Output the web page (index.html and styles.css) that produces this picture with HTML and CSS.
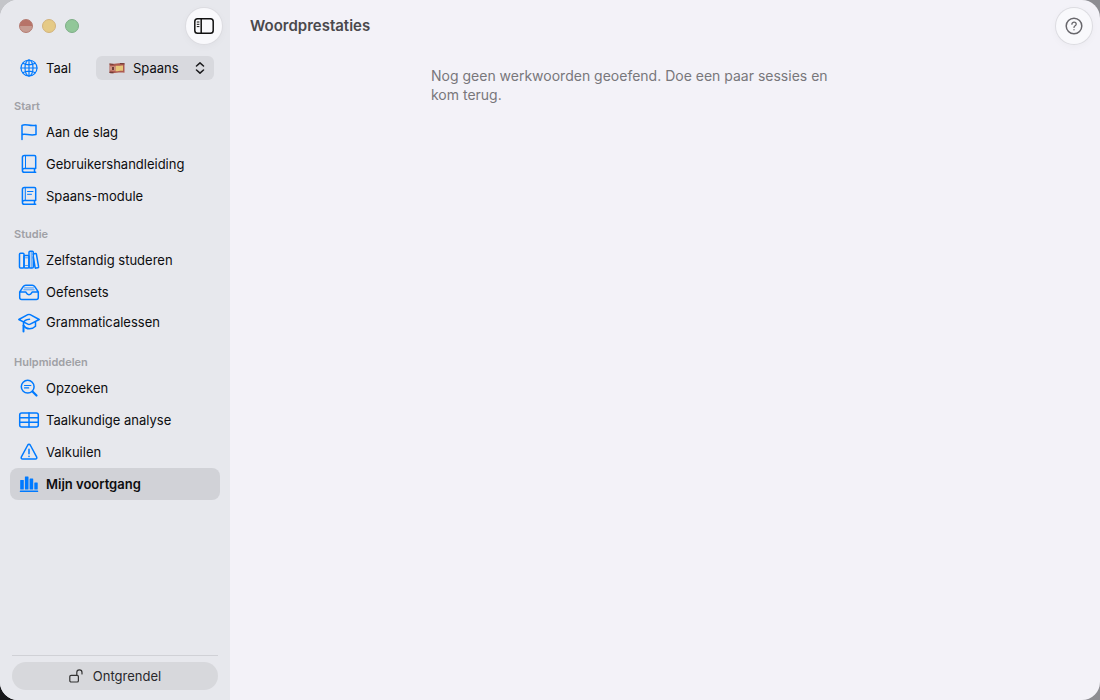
FILE: index.html
```html
<!DOCTYPE html>
<html lang="nl">
<head>
<meta charset="utf-8">
<title>Woordprestaties</title>
<link rel="stylesheet" href="styles.css">
</head>
<body>
<div class="window">
  <aside class="sidebar">
    <div class="titlebar">
      <div class="lights">
        <button class="light close" aria-label="Sluit"></button>
        <button class="light minimize" aria-label="Minimaliseer"></button>
        <button class="light expand" aria-label="Vergroot"></button>
      </div>
      <button class="round" aria-label="Navigatiekolom">
        <svg width="20" height="16" viewBox="0 0 20 16" fill="none" stroke="#111" stroke-width="1.5" stroke-linecap="round"><rect x=".8" y=".8" width="18.4" height="14.4" rx="2.8"/><path d="M7.2 1v14"/><path stroke-width="1" d="M3.2 4h1.8M3.2 6.3h1.8M3.2 8.6h1.8"/></svg>
      </button>
    </div>
    <div class="language">
      <svg class="icon" viewBox="0 0 22 22"><circle cx="11" cy="11" r="8"/><ellipse cx="11" cy="11" rx="4" ry="8"/><path d="M11 3v16M3 11h16M4.7 6.3c3.8 1.8 8.8 1.8 12.6 0M4.7 15.7c3.8-1.8 8.8-1.8 12.6 0"/></svg>
      <label for="language">Taal</label>
      <div class="picker">
        <select id="language"><option>Spaans</option></select>
        <svg class="flag" width="16" height="12" viewBox="0 0 16 12"><path fill="#ae5b50" d="M.5 1.5c5 1.2 9-1.5 15-.3v9.6c-6-1-9 1-15 .2z"/><path fill="#e6c779" d="M6.5 3.8c3 .3 5-.5 7.500-.3v5.300c-3-.4-5 .6-7.500.4z"/><path fill="#cf9585" d="M1 4.200l5.500.1v4.400L1 8.600z"/><path fill="#713e38" d="M3 5h2v3H3zM.5 1.500l4 .4v1l-4-.3zM11 .9l4.500.3v1.200L11 2zM.5 9.800l4 .1v1.300l-4-.2z"/></svg>
        <svg class="chevrons" width="10" height="12" viewBox="0 0 10 12"><path d="M1.500 4L5 .9 8.500 4M1.500 8L5 11.100 8.500 8"/></svg>
      </div>
    </div>
    <nav>
      <h2>Start</h2>
      <a href="#" class="row"><svg class="icon" viewBox="0 0 22 22"><path d="M4 18.500V4.300c4-2 7 1.200 14 0v9.200c-7 1.500-10-1.500-14 0"/></svg>Aan de slag</a>
      <a href="#" class="row"><svg class="icon" viewBox="0 0 22 22"><path d="M17.700 15.500V3.800c0-.8-.4-1.200-1.200-1.200H6.400c-1.300 0-2 .7-2 2v12.500M17.700 15.500H6.300c-2.500 0-2.500 3.800 0 3.800h11.400M16.500 15.500v3.800"/><path stroke-width="1" d="M7.500 2.600v12.900"/></svg>Gebruikershandleiding</a>
      <a href="#" class="row"><svg class="icon" viewBox="0 0 22 22"><path d="M17.700 15.500V3.800c0-.8-.4-1.200-1.200-1.200H6.400c-1.300 0-2 .7-2 2v12.500M17.700 15.500H6.300c-2.500 0-2.500 3.800 0 3.800h11.400M16.500 15.500v3.800"/><path stroke-width="1" d="M7.300 2.600v12.900M9.500 6.500h5.500M9.500 9.300h4"/></svg>Spaans-module</a>
      <h2>Studie</h2>
      <a href="#" class="row"><svg class="icon" viewBox="0 0 22 22"><rect x="1.500" y="4.300" width="4.500" height="14.700" rx="1"/><rect x="6" y="6.500" width="5" height="12.500" rx="1"/><rect x="11" y="2.300" width="4.300" height="16.700" rx="1"/><path d="M15.300 5l2.200-.4c.5-.1.800.1.900.6l2.200 12.500c.1.500-.1.900-.6 1l-2 .4c-.5.100-.8-.1-.9-.6L15.300 8"/><path stroke-width=".7" d="M7.500 8.800h2M7.500 16.500h2M13.200 2.500V19"/></svg>Zelfstandig studeren</a>
      <a href="#" class="row"><svg class="icon" viewBox="0 0 22 22"><path d="M1.700 11v5.500c0 1.300.7 2 2 2h14.600c1.300 0 2-.7 2-2V11l-3.500-5.300c-.7-1-1.300-1.400-2.500-1.400H7.700c-1.200 0-1.800.4-2.500 1.400zh6c.6 0 .6 2.700 3.300 2.700S13.700 11 14.300 11h6"/><path stroke-width=".7" d="M6.500 6.900h9M5.800 8.800h10.400"/></svg>Oefensets</a>
      <a href="#" class="row row-short"><svg class="icon" viewBox="0 0 22 22"><path d="M.8 8.500L9.800 3.700c.8-.4 1.600-.4 2.400 0l9 4.800-9 4.700c-.8.400-1.600.4-2.400 0zM5.500 11v3.500c1.500 2.300 3.500 3.300 6 3.300 2.500 0 4.500-1 6-2.500v-4.500M11.500 8.200c-3 .3-5.500 1.300-6 3.300"/><path stroke-width="2" d="M5.500 14.500v6"/></svg>Grammaticalessen</a>
      <h2>Hulpmiddelen</h2>
      <a href="#" class="row"><svg class="icon" viewBox="0 0 22 22"><circle cx="9.700" cy="9.700" r="6.400"/><path stroke-width="2.200" d="M14.500 14.500l4 4"/><path stroke-width="1.100" d="M6.500 8.500h6.400M6.500 10.900h4.200"/></svg>Opzoeken</a>
      <a href="#" class="row"><svg class="icon" viewBox="0 0 22 22"><rect x="1.700" y="4" width="18.600" height="14" rx="2"/><path d="M11 4v14M1.700 8.700h18.600M1.700 13.300h18.600"/></svg>Taalkundige analyse</a>
      <a href="#" class="row"><svg class="icon" viewBox="0 0 22 22"><path d="M9.800 4c.6-1 1.800-1 2.400 0l6.400 11.800c.6 1.100 0 2.200-1.200 2.200H4.600c-1.200 0-1.800-1.100-1.200-2.200zM11 8.200v4.600M11 15.300v.1"/></svg>Valkuilen</a>
      <a href="#" class="row selected" aria-current="page"><svg class="icon" viewBox="0 0 22 22"><g fill="#007aff" stroke="none"><rect x="2.200" y="7" width="3.600" height="9.500" rx=".5"/><rect x="6.900" y="3.500" width="3.600" height="13" rx=".5"/><rect x="11.600" y="5.500" width="3.600" height="11" rx=".5"/><rect x="16.300" y="9.500" width="3.400" height="7" rx=".5"/><rect x="1.800" y="17.500" width="18.400" height="1.500" rx=".5"/></g></svg>Mijn voortgang</a>
    </nav>
    <footer>
      <button class="unlock"><svg width="14" height="14" viewBox="0 0 14 14" fill="none" stroke="#333" stroke-width="1.200" stroke-linecap="round"><rect x=".8" y="6.300" width="8.600" height="6.700" rx="1.300"/><path d="M7.800 6.300V3.500c0-3.400 5.200-3.400 5.200 0V5"/></svg>Ontgrendel</button>
    </footer>
  </aside>
  <main>
    <header>
      <h1>Woordprestaties</h1>
      <button class="round" aria-label="Help">
        <svg width="18" height="18" viewBox="0 0 18 18" fill="none" stroke="#68676c" stroke-width="1.500" stroke-linecap="round"><circle cx="9" cy="9" r="7.800"/><path stroke-width="1.300" d="M6.900 7.200c0-2.700 4.300-2.600 4.300 0C11.200 8.700 9 8.700 9 10.400M9 12.700v.1"/></svg>
      </button>
    </header>
    <p class="empty">Nog geen werkwoorden geoefend. Doe een paar sessies en kom terug.</p>
  </main>
</div>
</body>
</html>
```
FILE: styles.css
```css
* { box-sizing: border-box; }

body {
  margin: 0;
  font: 13px/16px Inter, "Liberation Sans", sans-serif;
  color: #0d0d0f;
  background: linear-gradient(to right, transparent 50%, #8d8d92 50%), linear-gradient(#c4c5c9 50%, #17171a 50%);
}

button, select { font: inherit; color: inherit; border: 0; padding: 0; }

.window {
  display: flex;
  min-height: 100vh;
  border-radius: 18px;
  overflow: hidden;
  background: #f3f2f8;
}

.sidebar {
  display: flex;
  flex-direction: column;
  flex: 0 0 230px;
  padding: 8px 10px 10px;
  background: #e7e8ed;
}

.titlebar, header {
  display: flex;
  align-items: center;
  justify-content: space-between;
}

.titlebar { padding: 0 0 0 9px; margin-right: -2px; }

.lights { display: flex; gap: 9px; }
.light { width: 14px; height: 14px; border-radius: 50%; }
.close { background: linear-gradient(#b77368 50%, #c69c92 50%); border: 1px solid #b4796f; }
.minimize { background: #e5ca86; border: 1px solid #d3b37c; }
.expand { background: #92c799; border: 1px solid #7eae87; }

.round {
  display: grid;
  place-items: center;
  width: 36px;
  height: 36px;
  border-radius: 50%;
  background: #f9f9fc;
  box-shadow: 0 0 0 1px #dcdce1, 0 2px 8px #0000000a;
}

.icon {
  flex: none;
  width: 22px;
  height: 22px;
  fill: none;
  stroke: #007aff;
  stroke-width: 1.5;
  stroke-linecap: round;
  stroke-linejoin: round;
}

.language {
  display: flex;
  align-items: center;
  padding: 12px 6px 0 8px;
}
.language .icon { stroke-width: 1.2; }

.language label { flex: 1; padding-left: 6px; }

.picker { display: grid; align-items: center; width: 118px; }
.picker > * { grid-area: 1 / 1; pointer-events: none; }
.picker select {
  appearance: none;
  width: 100%;
  height: 24px;
  padding-left: 37px;
  border-radius: 6px;
  background: #d8d9de;
  pointer-events: auto;
}
.flag { margin-left: 13px; }
.chevrons {
  justify-self: end;
  margin-right: 9px;
  fill: none;
  stroke: #1b1b1d;
  stroke-width: 1.5;
  stroke-linecap: round;
  stroke-linejoin: round;
}

h2 {
  margin: 0;
  padding: 13px 4px 1px;
  font-size: 11px;
  line-height: 18px;
  font-weight: 600;
  color: #9fa0a5;
}
nav h2:first-child { padding-top: 17px; }

.row {
  display: flex;
  align-items: center;
  gap: 6px;
  height: 32px;
  padding: 0 8px;
  border-radius: 8px;
  color: inherit;
  text-decoration: none;
}
.row-short { padding-bottom: 4px; }
.selected { background: #d1d2d7; font-weight: 600; }

footer {
  margin: auto 2px 0;
  padding-top: 6px;
  border-top: 1px solid #d0d1d6;
}

.unlock {
  display: flex;
  align-items: center;
  justify-content: center;
  gap: 10px;
  width: 100%;
  height: 28px;
  border-radius: 14px;
  background: #d7d8dc;
  color: #29292c;
}

main { flex: 1; padding: 8px 8px 8px 20px; }

h1 {
  margin: 0;
  font-size: 15px;
  line-height: 20px;
  font-weight: 600;
  color: #4a494c;
}

.empty {
  max-width: 480px;
  margin: 22px auto 0;
  padding-right: 64px;
  font-size: 14px;
  line-height: 19px;
  color: #78777b;
}
```
